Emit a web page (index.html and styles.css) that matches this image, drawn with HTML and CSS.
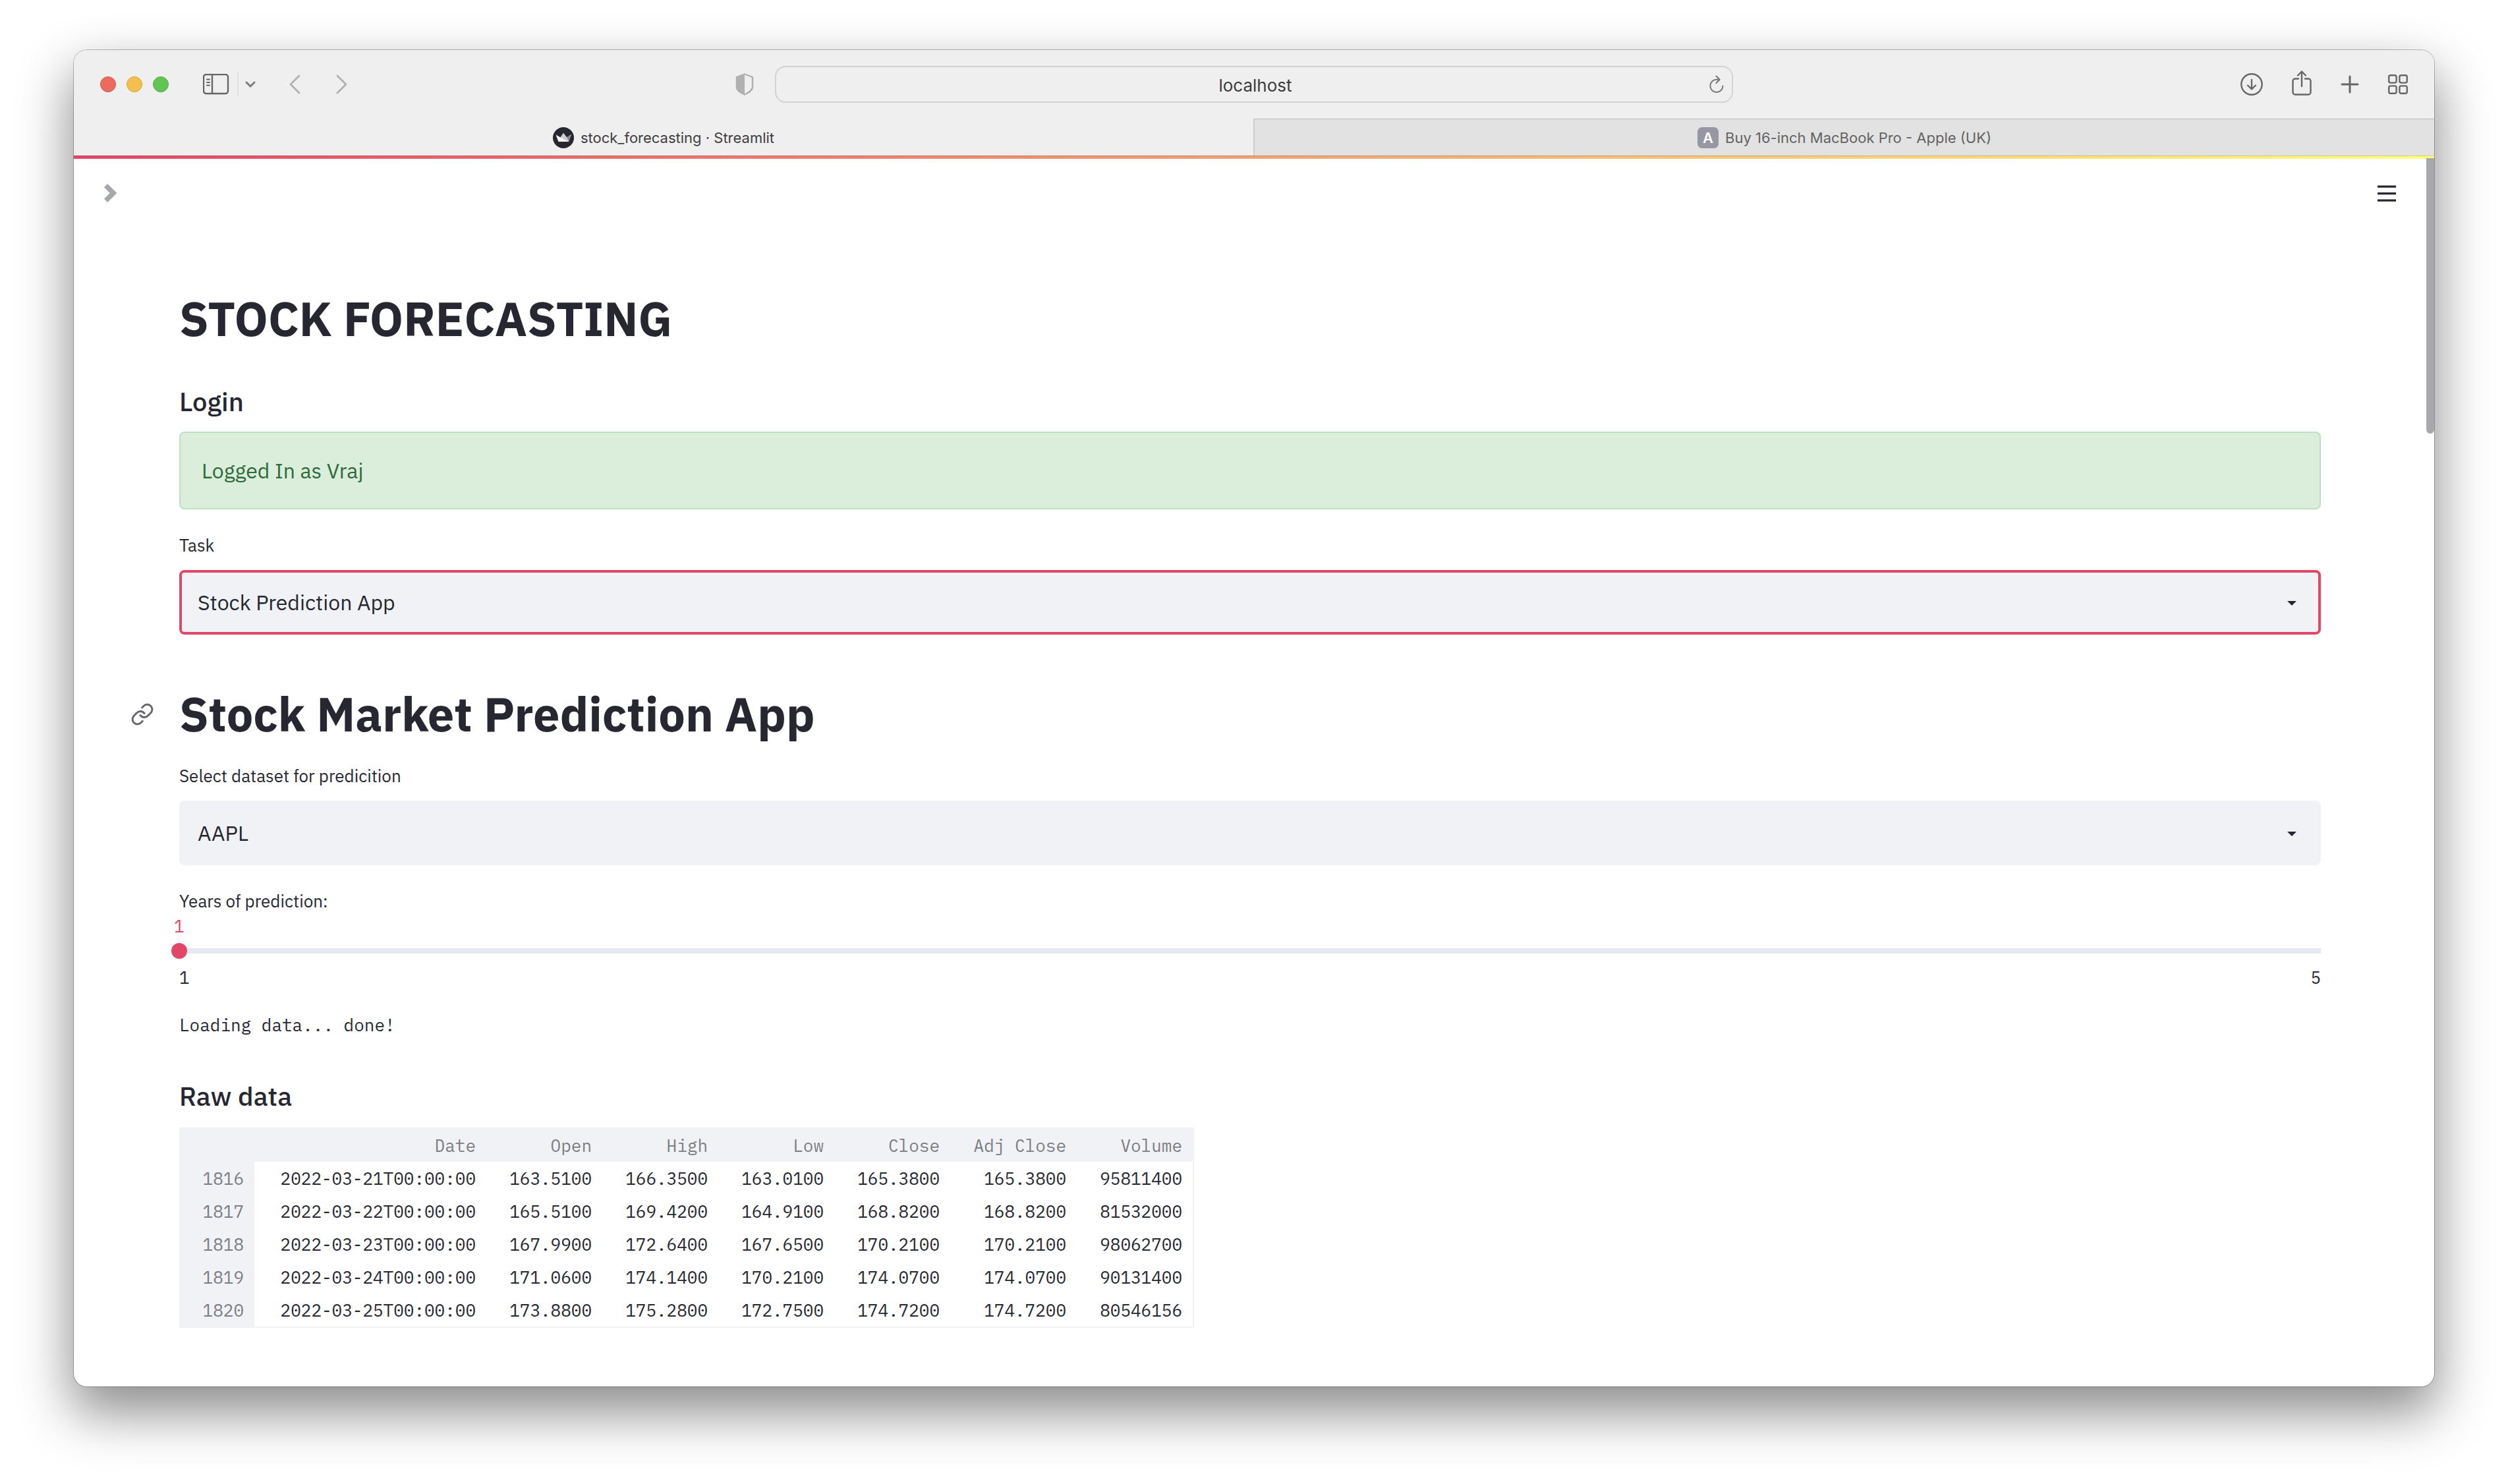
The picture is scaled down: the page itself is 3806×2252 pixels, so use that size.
FILE: index.html
```html
<!DOCTYPE html>
<html lang="en">
<head>
<meta charset="utf-8">
<title>stock_forecasting · Streamlit</title>
<link rel="stylesheet" href="styles.css">
</head>
<body>
<div class="window">
  <header class="toolbar">
    <div class="toolbar-left">
      <div class="lights"><button class="light red" aria-label="Close"></button><button class="light yellow" aria-label="Minimise"></button><button class="light green" aria-label="Zoom"></button></div>
      <button class="icon-btn sidebar-btn" aria-label="Sidebar"><svg width="40" height="32" viewBox="0 0 40 32" fill="none" stroke="#666" stroke-width="2"><rect x="1" y="1" width="37" height="29" rx="4" stroke-width="2.4"/><path d="M14 1v29" stroke-width="2.4"/><path d="M6 8.500h4M6 13h4M6 17.500h4" stroke-linecap="round"/></svg></button>
      <button class="icon-btn group-btn" aria-label="Tab groups"><svg width="16" height="12" viewBox="0 0 16 12" fill="none" stroke="#7b7b80" stroke-width="3" stroke-linecap="round" stroke-linejoin="round"><path d="M2 3l6 6 6-6"/></svg></button>
      <button class="icon-btn back-btn" aria-label="Back"><svg width="18" height="30" viewBox="0 0 18 30" fill="none" stroke="#b0b0b0" stroke-width="2.800" stroke-linecap="round" stroke-linejoin="round"><path d="M16 2L3 15l13 13"/></svg></button>
      <button class="icon-btn" aria-label="Forward"><svg width="18" height="30" viewBox="0 0 18 30" fill="none" stroke="#b0b0b0" stroke-width="2.800" stroke-linecap="round" stroke-linejoin="round"><path d="M2 2l13 13L2 28"/></svg></button>
    </div>
    <div class="address">
      <button class="icon-btn shield-btn" aria-label="Privacy report"><svg width="28" height="34" viewBox="0 0 28 34"><path d="M14 1.500L26 6v15c0 5-5 8-12 11.500C7 29 2 26 2 21V6z" fill="none" stroke="#b0b0b0" stroke-width="2.400" stroke-linejoin="round"/><path d="M14 1L1 5.500V21c0 6 5 8 13 12z" fill="#b0b0b0"/></svg></button>
      <div class="url-box">
        <input class="url" type="text" value="localhost" aria-label="Address">
        <button class="icon-btn reload-btn" aria-label="Reload"><svg width="22" height="28" viewBox="0 0 22 28" fill="none" stroke="#777" stroke-width="2" stroke-linecap="round" stroke-linejoin="round"><path d="M20.500 16.500a9.600 9.600 0 1 1-9.600-9.800h4.600M10.500 1.500l5.200 5.200-5.200 5.300"/></svg></button>
      </div>
    </div>
    <div class="toolbar-right">
      <button class="icon-btn" aria-label="Downloads"><svg width="34" height="34" viewBox="0 0 34 34" fill="none" stroke="#666" stroke-width="2.400" stroke-linecap="round" stroke-linejoin="round"><circle cx="17" cy="17" r="15.700"/><path d="M17 10v14M11 18.500l6 5.800 6-5.800"/></svg></button>
      <button class="icon-btn share-btn" aria-label="Share"><svg width="30" height="38" viewBox="0 0 30 38" fill="none" stroke="#666" stroke-width="2.400" stroke-linecap="round" stroke-linejoin="round"><path d="M10 12.500H5a3.500 3.500 0 0 0-3.500 3.500v17A3.500 3.500 0 0 0 5 36.500h20a3.500 3.500 0 0 0 3.500-3.500V16a3.500 3.500 0 0 0-3.500-3.500h-5M15 24V2M9 7.500L15 1.500l6 6"/></svg></button>
      <button class="icon-btn" aria-label="New tab"><svg width="28" height="28" viewBox="0 0 28 28" fill="none" stroke="#666" stroke-width="3" stroke-linecap="round"><path d="M14 2v24M2 14h24"/></svg></button>
      <button class="icon-btn" aria-label="Tab overview"><svg width="30" height="30" viewBox="0 0 30 30" fill="none" stroke="#666" stroke-width="2.400"><rect x="1.200" y="1.200" width="11.400" height="11.400" rx="2.500"/><rect x="17.400" y="1.200" width="11.400" height="11.400" rx="2.500"/><rect x="1.200" y="17.400" width="11.400" height="11.400" rx="2.500"/><rect x="17.400" y="17.400" width="11.400" height="11.400" rx="2.500"/></svg></button>
    </div>
  </header>
  <nav class="tabs">
    <a class="tab active" href="#"><svg width="32" height="32" viewBox="0 0 32 32"><circle cx="16" cy="16" r="16" fill="#262730"/><path d="M4.500 11.500l7 4L16 9l5 6.500 7-4.500-4 11H8.500z" fill="#fff"/><path d="M11.500 15.500L16 9l5 6.500 2 6.500z" fill="#ccc"/><path d="M21 15.500l7-4.500-4 11z" fill="#888"/></svg><span>stock_forecasting · Streamlit</span></a>
    <a class="tab" href="#"><span class="favicon">A</span><span>Buy 16-inch MacBook Pro - Apple (UK)</span></a>
  </nav>
  <main class="page">
    <div class="page-top">
      <button class="icon-btn" aria-label="Open sidebar"><svg width="20" height="28" viewBox="0 0 20 28" fill="none" stroke="#a6a7ab" stroke-width="7.500"><path d="M2.600 2.600L14 14 2.600 25.400"/></svg></button>
      <button class="icon-btn" aria-label="Menu"><svg width="28" height="26" viewBox="0 0 28 26" fill="#262730"><path d="M0 1.500h28v3.300H0zM0 12h28v3.300H0zM0 22.500h28v3.300H0z"/></svg></button>
    </div>
    <div class="content">
      <h1>STOCK FORECASTING</h1>
      <h3>Login</h3>
      <div class="alert" role="status">Logged In as Vraj</div>
      <div class="field">
        <label for="task">Task</label>
        <div class="select-box"><select id="task" class="focused"><option>Stock Prediction App</option></select><svg class="caret" width="14" height="7" viewBox="0 0 14 7"><path d="M0 0h14L7 7z" fill="#262730"/></svg></div>
      </div>
      <h1 class="app-title"><a class="anchor" href="#" aria-label="Link to this heading"><svg width="36" height="36" viewBox="0 0 24 24" fill="none" stroke="#66676d" stroke-width="2" stroke-linecap="round" stroke-linejoin="round"><path d="M10 13a5 5 0 0 0 7.540.540l3-3a5 5 0 0 0-7.070-7.070l-1.720 1.710"/><path d="M14 11a5 5 0 0 0-7.540-.540l-3 3a5 5 0 0 0 7.070 7.070l1.710-1.710"/></svg></a>Stock Market Prediction App</h1>
      <div class="field">
        <label for="dataset">Select dataset for predicition</label>
        <div class="select-box"><select id="dataset"><option>AAPL</option></select><svg class="caret" width="14" height="7" viewBox="0 0 14 7"><path d="M0 0h14L7 7z" fill="#262730"/></svg></div>
      </div>
      <div class="field slider">
        <label for="years">Years of prediction:</label>
        <output for="years">1</output>
        <input id="years" type="range" min="1" max="5" value="1">
        <div class="range-ends"><span>1</span><span>5</span></div>
      </div>
      <p class="status">Loading data... done!</p>
      <h3>Raw data</h3>
      <table>
        <colgroup><col class="c-index"><col class="c-date"><col class="c-num"><col class="c-num"><col class="c-num"><col class="c-num"><col class="c-adj"><col class="c-num"></colgroup>
        <thead><tr><th></th><th>Date</th><th>Open</th><th>High</th><th>Low</th><th>Close</th><th>Adj Close</th><th>Volume</th></tr></thead>
        <tbody>
          <tr><th>1816</th><td>2022-03-21T00:00:00</td><td>163.5100</td><td>166.3500</td><td>163.0100</td><td>165.3800</td><td>165.3800</td><td>95811400</td></tr>
          <tr><th>1817</th><td>2022-03-22T00:00:00</td><td>165.5100</td><td>169.4200</td><td>164.9100</td><td>168.8200</td><td>168.8200</td><td>81532000</td></tr>
          <tr><th>1818</th><td>2022-03-23T00:00:00</td><td>167.9900</td><td>172.6400</td><td>167.6500</td><td>170.2100</td><td>170.2100</td><td>98062700</td></tr>
          <tr><th>1819</th><td>2022-03-24T00:00:00</td><td>171.0600</td><td>174.1400</td><td>170.2100</td><td>174.0700</td><td>174.0700</td><td>90131400</td></tr>
          <tr><th>1820</th><td>2022-03-25T00:00:00</td><td>173.8800</td><td>175.2800</td><td>172.7500</td><td>174.7200</td><td>174.7200</td><td>80546156</td></tr>
        </tbody>
      </table>
    </div>
    <div class="scrollbar"></div>
  </main>
</div>
</body>
</html>
```
FILE: styles.css
```css
* { box-sizing: border-box; }
body {
  margin: 0;
  min-height: 100vh;
  padding: 76px 112px 148px;
  display: flex;
  background: #fff;
  color: #262730;
  font-family: "IBM Plex Sans", Roboto, sans-serif;
  font-size: 32px;
}
button, input, select { font: inherit; color: inherit; }
h1, h3, p { margin: 0; }

.window {
  flex: 1;
  display: flex;
  flex-direction: column;
  border-radius: 20px;
  overflow: hidden;
  background: #fff;
  box-shadow: 0 0 0 1px rgba(0, 0, 0, .25), 0 36px 80px 4px rgba(0, 0, 0, .45);
}

.icon-btn { display: flex; border: 0; padding: 0; background: none; }
.toolbar {
  display: grid;
  grid-template-columns: 1fr 1454px 1fr;
  align-items: center;
  height: 104px;
  padding: 0 40px;
  background: #efefef;
  font-family: Inter, sans-serif;
}
.toolbar-left, .toolbar-right, .address, .lights { display: flex; align-items: center; }
.lights { gap: 16px; }
.light { width: 24px; height: 24px; padding: 0; border: 1px solid; border-radius: 50%; }
.red { background: #ed6a5e; border-color: #d5554a; }
.yellow { background: #f5bf4f; border-color: #d8a23c; }
.green { background: #61c554; border-color: #4faa40; }
.sidebar-btn { margin-left: 52px; }
.group-btn { margin-left: 12px; padding: 12px 0 12px 10px; border-left: 2px solid #e0e0e0; }
.back-btn { margin: 0 54px 0 50px; }
.toolbar-right { justify-content: flex-end; gap: 44px; }
.share-btn { padding-bottom: 4px; }
.address { gap: 32px; margin-left: -60px; }
.url-box {
  display: flex;
  align-items: center;
  flex: 1;
  height: 56px;
  padding: 0 12px 0 38px;
  border: 2px solid #d2d2d2;
  border-radius: 16px;
}
.url { flex: 1; border: 0; padding: 2px 0 0; background: none; text-align: center; font-size: 26px; color: #3c3c3c; }

.tabs { display: flex; height: 56px; background: #e2e2e2; font-family: Inter, sans-serif; font-size: 22px; }
.tab {
  flex: 1;
  display: flex;
  align-items: center;
  justify-content: center;
  gap: 10px;
  color: #636363;
  text-decoration: none;
  border-top: 1px solid #bdbdbd;
  border-left: 2px solid #cecece;
}
.tab.active { background: #efefef; color: #404040; border-top-color: #efefef; border-left: 0; }
.favicon {
  width: 32px;
  height: 32px;
  border-radius: 7px;
  background: #9697a3;
  color: #fff;
  font-weight: 600;
  line-height: 32px;
  text-align: center;
}

.page { position: relative; flex: 1; }
.page::before {
  content: "";
  display: block;
  height: 4px;
  border-top: 1px solid rgba(0, 0, 0, .16);
  background: linear-gradient(90deg, #e64567, #fffd80) border-box;
}
.page-top { display: flex; justify-content: space-between; align-items: center; padding: 38px 58px 0 46px; }
.scrollbar {
  position: absolute;
  top: 4px;
  right: 0;
  width: 12px;
  height: 418px;
  background: #a7a8ac;
  border-radius: 0 0 6px 6px;
}
.content { padding: 132px 172px 88px 160px; }

h1 { font-size: 72px; line-height: 88px; font-weight: 700; }
h3 { font-size: 40px; line-height: 48px; font-weight: 500; }
h1 + h3 { margin-top: 58px; }
.alert {
  margin-top: 22px;
  padding: 32px;
  border: 2px solid #bfe0c0;
  border-radius: 8px;
  background: #dbeedb;
  color: #2f6b3a;
  line-height: 50px;
}
.field { display: flex; flex-direction: column; }
label { font-size: 26px; line-height: 32px; }
.alert + .field, .slider { margin-top: 38px; }
.select-box { position: relative; margin-top: 22px; }
select {
  appearance: none;
  display: block;
  width: 100%;
  height: 98px;
  padding: 0 24px;
  border: 4px solid #f0f2f6;
  border-radius: 8px;
  background: #f0f2f6;
}
select.focused { border-color: #e34767; }
.caret { position: absolute; right: 37px; top: 47px; pointer-events: none; }
.app-title { position: relative; margin: 76px 0 34px; }
.anchor { position: absolute; right: 100%; top: 27px; margin-right: 38px; display: flex; }
.slider output, .status, table { font-family: "IBM Plex Mono", "Liberation Mono", monospace; font-size: 26px; }
.slider output { width: 16px; margin: 4px 0 0 -8px; color: #e34767; line-height: 36px; }
input[type="range"] {
  appearance: none;
  height: 24px;
  margin: 8px 0 8px -12px;
  background: linear-gradient(#e5e8f0, #e5e8f0) 12px 8px / 100% 8px no-repeat;
}
input[type="range"]::-webkit-slider-thumb { appearance: none; width: 24px; height: 24px; border-radius: 50%; background: #e34767; }
.range-ends { display: flex; justify-content: space-between; font-size: 26px; line-height: 40px; }
.status { margin: 32px 0 64px; line-height: 40px; }

table { table-layout: fixed; width: 1540px; margin-top: 24px; border-collapse: separate; border-spacing: 0; border: 2px solid #f0f2f6; border-left: 0; }
.c-index { width: 114px; }
.c-date { width: 352px; }
.c-num { width: 176px; }
.c-adj { width: 192px; }
th, td { height: 50px; padding: 0 16px 0 0; text-align: right; line-height: 50px; white-space: nowrap; }
th { background: #f0f2f6; color: #7c7d82; font-weight: 400; }
```
